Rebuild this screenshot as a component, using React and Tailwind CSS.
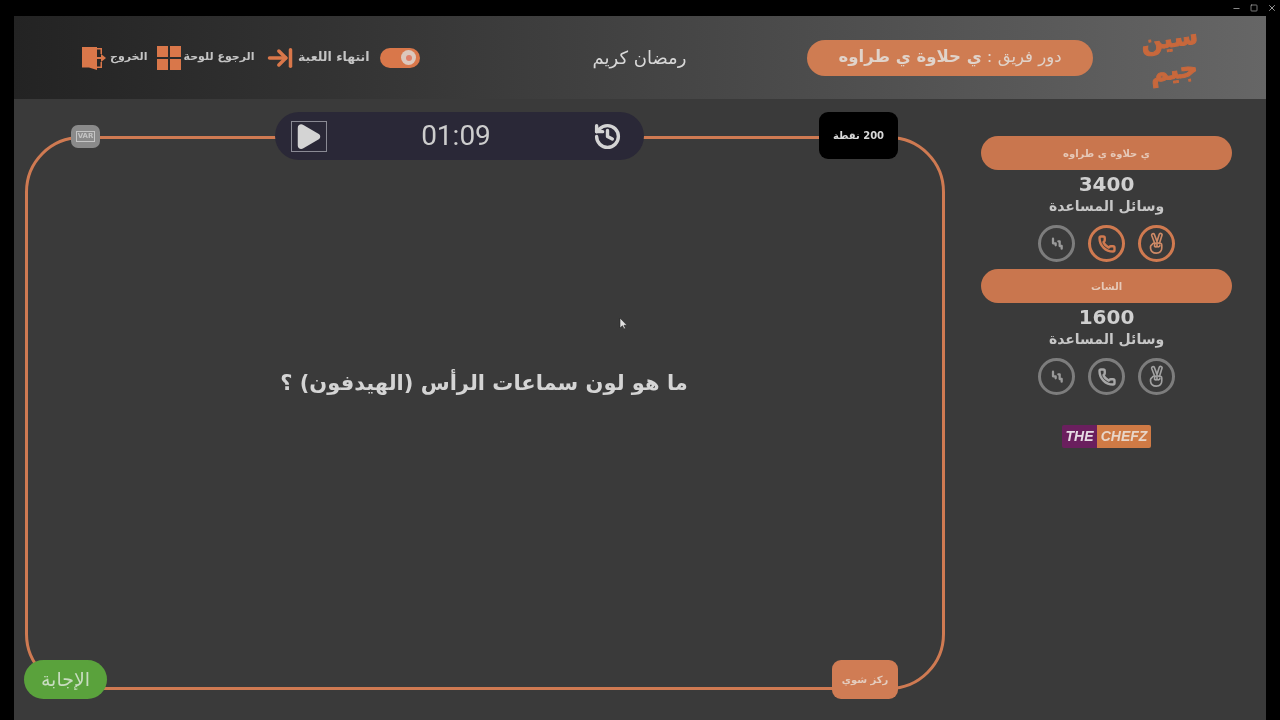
import React from 'react';
import { ArrowRightToLine, History, Minus, Phone, Square, X } from 'lucide-react';

const arabicFont = "font-['DejaVu_Sans',sans-serif]";

const SwapIcon = ({ className }) => (
  <svg viewBox="0 0 24 24" className={className} fill="none" stroke="currentColor" strokeWidth="3.400" strokeLinecap="round" strokeLinejoin="round">
    <path d="M6 4v7h4v3" />
    <path d="M14 8h2v7h3v4" />
  </svg>
);

const PeaceIcon = ({ className }) => (
  <svg viewBox="0 0 24 24" className={className} fill="none" stroke="currentColor" strokeWidth="1.700" strokeLinecap="round" strokeLinejoin="round">
    <path d="M10 11.500 7 3.600a1.500 1.500 0 0 1 2.800-1l2.700 7.200 2.300-7.300a1.500 1.500 0 0 1 2.900.9l-2.500 8" />
    <path d="M7.500 13c-1.500.5-2 2-1.700 4 .4 3 2.500 5 6 5 3.800 0 5.700-2.500 5.700-5.500v-3c0-1.500-1.500-2-2.500-1.500-1.500-1-3-1-4 0-1.500-.7-3-.2-3.500 1z" />
    <path d="M10 12v3c1 1 2.500.5 2.500-.5v-2.500M12.500 12.500v2.500c1 1 3 .5 3-1" />
  </svg>
);

const ExitIcon = () => (
  <svg viewBox="0 0 24 24" className="h-[24px] w-[24px]">
    <path d="M0 1h15v23l-8-2.500H0z" fill="#d9774a" />
    <path d="M15 2h5v6h-1.500V3.500H15zM15 22h5v-6h-1.500v4.500H15z" fill="#d9774a" />
    <path d="M14 11h5V8l5 4-5 4v-3h-5z" fill="#d9774a" />
  </svg>
);

const AidCircle = ({ active, children }) => (
  <div
    className={`flex h-[37px] w-[37px] items-center justify-center rounded-full border-[3px] ${
      active ? 'border-[#d07a50]' : 'border-[#7d7d7d]'
    }`}
  >
    {children}
  </div>
);

const TeamPanel = ({ name, score, peaceActive, phoneActive }) => (
  <div className="flex flex-col items-center">
    <div className="flex h-[34px] w-full items-center justify-center rounded-full bg-[#c9764e] text-[10px] font-bold text-[#e6c9b8]">
      {name}
    </div>
    <div className="mt-[2px] text-[20px] leading-[24px] font-bold text-[#d0d0d0]">{score}</div>
    <div className="text-[14px] leading-[20px] font-bold text-[#c6c6c6]">وسائل المساعدة</div>
    <div className="mt-[9px] flex flex-row-reverse gap-[13px]">
      <AidCircle active={peaceActive}>
        <PeaceIcon className={`h-[23px] w-[23px] ${peaceActive ? 'text-[#cf8a66]' : 'text-[#a2a2a2]'}`} />
      </AidCircle>
      <AidCircle active={phoneActive}>
        <Phone className={`h-[18px] w-[18px] ${phoneActive ? 'text-[#d07a50]' : 'text-[#a8a8a8]'}`} strokeWidth={3.2} />
      </AidCircle>
      <AidCircle>
        <SwapIcon className="h-[16px] w-[16px] text-[#9a9a9a]" />
      </AidCircle>
    </div>
  </div>
);

export default function App() {
  return (
    <div dir="ltr" className={`flex h-[720px] w-[1280px] flex-col overflow-hidden bg-black blur-[0.4px] ${arabicFont}`}>
      {/* Window bar */}
      <div className="flex h-[16px] items-center justify-end gap-[9px] pr-[3px] text-[#b5b5b5]">
        <Minus className="h-[9px] w-[9px]" />
        <Square className="h-[8px] w-[8px]" />
        <X className="h-[10px] w-[10px]" />
      </div>

      <div className="flex min-h-0 flex-1 flex-col px-[14px]">
        {/* Header */}
        <header className="flex h-[83px] items-center bg-gradient-to-r from-[#232323] to-[#666666] pl-[68px]">
          <div className="flex w-[338px] items-center font-bold text-[#c4c4c4]">
            <ExitIcon />
            <span className="ml-[4px] w-[37px] text-center text-[11px] whitespace-nowrap">الخروج</span>
            <div className="ml-[10px] grid h-[24px] w-[24px] grid-cols-2 gap-[2px]">
              <div className="bg-[#d9774a]" />
              <div className="bg-[#d9774a]" />
              <div className="bg-[#d9774a]" />
              <div className="bg-[#d9774a]" />
            </div>
            <span className="ml-[2px] w-[72px] text-center text-[11px] whitespace-nowrap">الرجوع للوحة</span>
            <ArrowRightToLine className="ml-[11px] h-[28px] w-[28px] text-[#d9774a]" strokeWidth={3} />
            <span className="ml-[4px] w-[71px] text-center text-[12.500px] whitespace-nowrap">انتهاء اللعبة</span>
            <div className="ml-[11px] flex h-[20px] w-[40px] items-center justify-end rounded-full bg-[#d9774a] pr-[4px]">
              <div className="flex h-[15px] w-[15px] items-center justify-center rounded-full bg-[#dcc8bd]">
                <div className="h-[6px] w-[6px] rounded-full bg-[#e0806a]" />
              </div>
            </div>
          </div>

          <div className="ml-[171px] w-[97px] text-center text-[18px] whitespace-nowrap text-[#d8d8d8]">رمضان كريم</div>

          <div dir="rtl" className="ml-[119px] flex h-[36px] w-[286px] items-center justify-center rounded-full bg-[#cf7c52] text-[16.500px] whitespace-nowrap text-[#e0d3ca]">
            دور فريق : <span className="mr-[5px] font-bold">ي حلاوة ي طراوه</span>
          </div>

          <div className="-mt-[6px] ml-[52px] flex w-[53px] -rotate-[8deg] flex-col items-center text-[25px] leading-[32px] font-bold text-[#c8683c] [-webkit-text-stroke:1px_#c8683c]">
            <span>سين</span>
            <span>جيم</span>
          </div>
        </header>

        {/* Main area */}
        <main className="flex min-h-0 flex-1 bg-[#3a3a3a]">
          <div className="relative mt-[37px] ml-[11px] h-[554px] w-[920px] rounded-[56px] border-[3px] border-[#cf7a52]">
            <div className="flex h-full items-center justify-center pr-[2px] pb-[58px]">
              <h1 className="text-[21px] font-bold text-[#d4d4d4]" dir="rtl">ما هو لون سماعات الرأس (الهيدفون) ؟</h1>
            </div>

            {/* VAR badge */}
            <div className="absolute top-[-14px] left-[43px] flex h-[23px] w-[29px] items-center justify-center rounded-[7px] bg-[#8a8a8a]">
              <div className="border border-[#c4c4c4] px-[1px] text-[7px] leading-[9px] font-bold text-[#c4c4c4]">VAR</div>
            </div>

            {/* Timer */}
            <div className="absolute top-[-27px] left-[247px] flex h-[48px] w-[369px] items-center justify-between rounded-full bg-[#2a2837] pr-[22px] pl-[16px]">
              <div className="flex h-[31px] w-[36px] items-center justify-center border border-[#8a8a94]">
                <svg viewBox="0 0 24 24" className="h-[30px] w-[30px]">
                  <path d="M3 5.500c0-2.500 2.500-3.500 4.500-2.300l12 7c2 1.200 2 3.400 0 4.600l-12 7C5.500 23 3 22 3 19.500z" fill="#d4d4d4" />
                </svg>
              </div>
              <div className="mr-[8px] text-[28px] font-normal text-[#cdcdcd] font-['Roboto',sans-serif]">01:09</div>
              <History className="h-[29px] w-[29px] text-[#d4d4d4]" strokeWidth={2.8} />
            </div>

            {/* Points */}
            <div dir="rtl" className="absolute top-[-27px] right-[44px] flex h-[47px] w-[79px] items-center justify-center rounded-[9px] bg-black text-[10px] font-bold whitespace-nowrap text-[#d8d8d8]">
              200 نقطة
            </div>

            {/* Answer */}
            <div className="absolute bottom-[-12px] left-[-4px] flex h-[39px] w-[83px] items-center justify-center rounded-full bg-[#5aa23c] text-[19px] text-[#c8dcc0]">
              الإجابة
            </div>

            {/* Focus */}
            <div className="absolute right-[44px] bottom-[-12px] flex h-[39px] w-[66px] items-center justify-center rounded-[9px] bg-[#d07c54] text-[10px] font-bold whitespace-nowrap text-[#e4cdbf]">
              ركز شوي
            </div>

            {/* Mouse cursor */}
            <svg viewBox="0 0 10 14" className="absolute top-[178px] left-[591px] h-[14px] w-[10px]">
              <path d="M1 1v10l2.500-2.200L5 12l1.500-.7L5 8.300h3z" fill="#e0e0e0" stroke="#222" strokeWidth="0.6" />
            </svg>
          </div>

          {/* Sidebar */}
          <aside className="mt-[37px] ml-[36px] flex w-[251px] flex-col">
            <TeamPanel name="ي حلاوة ي طراوه" score="3400" peaceActive phoneActive />
            <div className="mt-[7px]">
              <TeamPanel name="الشات" score="1600" />
            </div>
            <div className="mt-[30px] flex justify-center">
              <div className="flex h-[23px] w-[89px] items-stretch overflow-hidden rounded-[2px] text-[14px] font-bold italic font-['Liberation_Sans',sans-serif]">
                <div className="flex w-[35px] items-center justify-center bg-[#6a1f5e] text-[#e6dbe4]">THE</div>
                <div className="flex flex-1 items-center justify-center bg-[#cf7a45] text-[#e8d5c8]">CHEFZ</div>
              </div>
            </div>
          </aside>
        </main>
      </div>
    </div>
  );
}
